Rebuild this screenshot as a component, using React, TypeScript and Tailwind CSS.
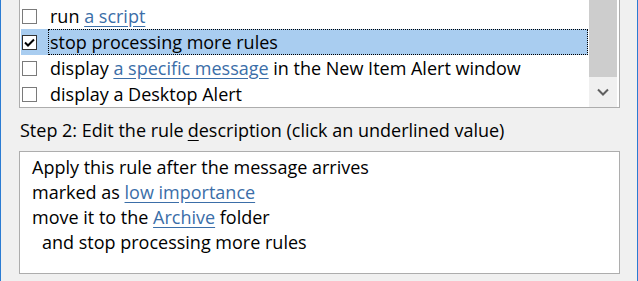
import React from 'react';

const font = { fontFamily: '"Segoe UI", "Open Sans", "Noto Sans", sans-serif' };

interface RuleRow {
  id: string;
  checked: boolean;
  parts: { text: string; link?: boolean }[];
}

const rows: RuleRow[] = [
  { id: 'script', checked: false, parts: [{ text: 'run ' }, { text: 'a script', link: true }] },
  { id: 'stop', checked: true, parts: [{ text: 'stop processing more rules' }] },
  {
    id: 'message',
    checked: false,
    parts: [
      { text: 'display ' },
      { text: 'a specific message', link: true },
      { text: ' in the New Item Alert window' },
    ],
  },
  { id: 'desktop', checked: false, parts: [{ text: 'display a Desktop Alert' }] },
];

const Link: React.FC<{ children: React.ReactNode }> = ({ children }) => (
  <span className="text-[#3b6ea8] underline decoration-[#3b6ea8] underline-offset-[3px]">{children}</span>
);

const CheckBox: React.FC<{ checked: boolean }> = ({ checked }) => (
  <div
    className={`w-[15px] h-[15px] flex-shrink-0 bg-white border flex items-center justify-center ${
      checked ? 'border-[#333333]' : 'border-[#7a7a7a]'
    }`}
  >
    {checked && (
      <svg width="13" height="13" viewBox="0 0 13 13" fill="none" stroke="#000" strokeWidth="2">
        <path d="M2 6.5 L5 9.5 L11 3.5" />
      </svg>
    )}
  </div>
);

export default function App() {
  return (
    <div
      className="w-[638px] h-[281px] bg-[#f0f0f0] border-l border-r border-[#2b7cd3] pl-[18px] pr-[17px] flex flex-col text-[18px] text-black overflow-hidden"
      style={font}
    >
      {/* Step 1 list (scrolled) */}
      <div className="h-[108px] flex-shrink-0 bg-white border border-t-0 border-[#adadad] flex pl-px">
        <div className="flex-1 pt-[3px]">
          {rows.map((row) => (
            <div
              key={row.id}
              className={`h-[26px] flex items-center pl-px ${row.checked ? 'bg-[#a9cdf0]' : ''}`}
            >
              <CheckBox checked={row.checked} />
              <div
                className={`ml-[11px] h-full flex-1 flex items-center pl-[2px] whitespace-nowrap leading-none ${
                  row.checked ? 'border border-dotted border-black pl-px' : ''
                }`}
              >
                {row.parts.map((p, i) =>
                  p.link ? <Link key={i}>{p.text}</Link> : <span key={i} className="whitespace-pre">{p.text}</span>
                )}
              </div>
            </div>
          ))}
        </div>
        {/* Scrollbar */}
        <div className="w-[28px] ml-px mr-[2px] flex flex-col">
          <div className="flex-1 bg-[#cdcdcd]" />
          <div className="h-[30px] bg-[#f0f0f0] flex items-center justify-center">
            <svg width="12" height="8" viewBox="0 0 12 8" fill="none" stroke="#606060" strokeWidth="2">
              <path d="M1 1.5 L6 6.5 L11 1.5" />
            </svg>
          </div>
        </div>
      </div>

      {/* Step 2 label */}
      <div className="h-[43px] flex items-center pl-px pt-[2px] whitespace-nowrap">
        Step 2: Edit the rule <span className="underline underline-offset-[3px] mx-[4px]">d</span>
        <span className="-ml-[4px]">escription (click an underlined value)</span>
      </div>

      {/* Description box */}
      <div className="h-[123px] flex-shrink-0 bg-white border border-[#adadad] pl-[12px] pt-[3px] leading-[25px] whitespace-nowrap">
        <div>Apply this rule after the message arrives</div>
        <div>
          marked as <Link>low importance</Link>
        </div>
        <div>
          move it to the <Link>Archive</Link> folder
        </div>
        <div className="pl-[10px]">and stop processing more rules</div>
      </div>
    </div>
  );
}
